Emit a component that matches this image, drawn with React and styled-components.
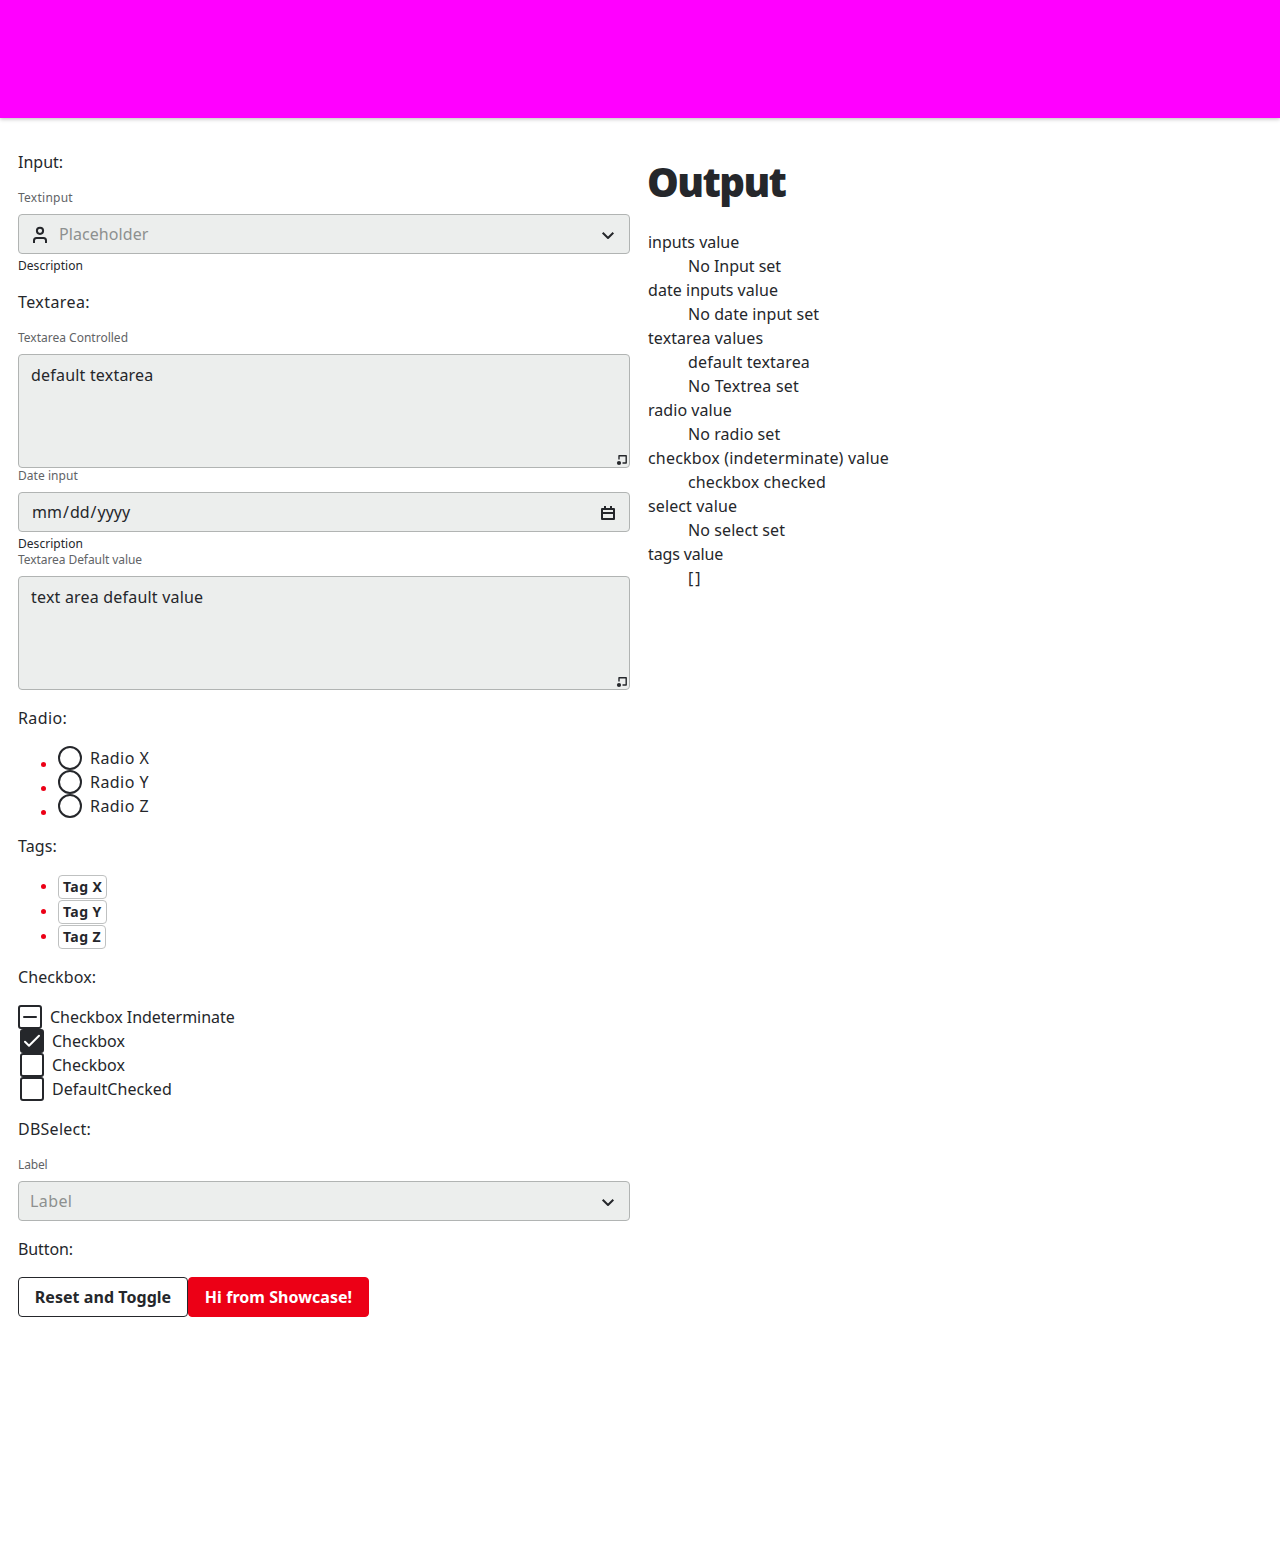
import React from 'react';
import styled, { createGlobalStyle, css } from 'styled-components';

const ink = '#25272b';
const red = '#ec0016';

const GlobalStyle = createGlobalStyle`
  *, *::before, *::after { box-sizing: border-box; }
  body {
    margin: 0;
    background: #fff;
    color: ${ink};
    font: 400 16px/24px "Noto Sans", "Open Sans", sans-serif;
  }
`;

const track = css`
  letter-spacing: ${({ $track = 0 }) => $track}px;
`;

const Header = styled.header`
  height: 118px;
  background: #ff00ff;
  box-shadow: 0 1px 4px rgba(0, 0, 0, 0.28);
`;

const Page = styled.main`
  display: grid;
  grid-template-columns: 612px 612px;
  column-gap: 18px;
  padding: 32px 18px 0;
`;

const Column = styled.section`
  display: flex;
  flex-direction: column;
`;

const SectionTitle = styled.p`
  margin: 0 0 16px;
  ${track}

  * + & { margin-top: 16px; }
`;

const Field = styled.div`
  display: flex;
  flex-direction: column;
`;

const Label = styled.label`
  margin-bottom: 8px;
  font-size: 12px;
  line-height: 16px;
  color: #616366;
  ${track}
`;

const Description = styled.span`
  margin-top: 4px;
  font-size: 12px;
  line-height: 16px;
  letter-spacing: 0.04px;
`;

const Control = styled.div`
  display: flex;
  align-items: center;
  height: 40px;
  padding: 0 9px;
  border: 1px solid #b1b4b3;
  border-radius: 4px;
  background: #eceeed;
`;

const fieldReset = css`
  flex: 1;
  min-width: 0;
  height: 38px;
  margin: 0;
  border: 0;
  outline: 0;
  background: transparent;
  color: ${ink};
  font: inherit;
`;

const TextInput = styled.input`
  ${fieldReset}
  padding: 0 0 0 7px;
  letter-spacing: 0.07px;
  &::placeholder { color: #8d908f; opacity: 1; }
`;

const DateInput = styled.input`
  ${fieldReset}
  padding: 0 0 0 3px;
  &::-webkit-calendar-picker-indicator { display: none; }
`;

const Select = styled.select`
  ${fieldReset}
  appearance: none;
  padding: 0 0 0 2px;
  color: #8d908f;
  letter-spacing: 0.4px;
`;

const AreaFrame = styled.div`
  position: relative;
  display: flex;
  height: 114px;
  border: 1px solid #b1b4b3;
  border-radius: 4px;
  background: #eceeed;
`;

const Area = styled.textarea`
  ${fieldReset}
  height: 112px;
  padding: 8px 12px;
  resize: none;
  letter-spacing: 0.2px;
`;

const Grip = styled.svg`
  position: absolute;
  right: 1px;
  bottom: 1px;
  width: 12px;
  height: 12px;
`;

const Icon = styled.svg`
  flex: none;
  width: 24px;
  height: 24px;
  fill: none;
  stroke: ${ink};
  stroke-width: 2;
  stroke-linejoin: round;
`;

const List = styled.ul`
  margin: 0;
  padding: 0 0 0 23px;
  list-style: none;
`;

const Item = styled.li`
  display: flex;
  align-items: ${({ $low }) => ($low ? 'center' : 'flex-end')};
  height: ${({ $low }) => ($low ? 24 : 25)}px;

  &::before {
    content: '';
    width: 5px;
    height: 5px;
    margin: ${({ $low }) => ($low ? '13px 12px 0 0' : '0 12px 10px 0')};
    border-radius: 50%;
    background: ${red};
  }
`;

const Choice = styled.label`
  display: flex;
  align-items: center;
  gap: 8px;
  height: 24px;
  margin-left: ${({ $indent = 0 }) => $indent}px;
  ${track}
`;

const RadioDot = styled.input`
  appearance: none;
  width: 24px;
  height: 24px;
  margin: 0;
  border: 2px solid ${ink};
  border-radius: 50%;
`;

const Box = styled.span`
  display: flex;
  width: 24px;
  height: 24px;
  border: 2px solid ${ink};
  border-radius: 3px;
  background: ${({ $filled }) => ($filled ? ink : '#fff')};
`;

const Mark = styled(Icon)`
  margin: -2px;
  stroke: ${({ $light }) => ($light ? '#fff' : ink)};
  stroke-linecap: round;
`;

const Tag = styled.span`
  height: 24px;
  padding: 0 4px;
  border: 1px solid #bfc1c1;
  border-radius: 4px;
  font-size: 14px;
  font-weight: 700;
  line-height: 22px;
  letter-spacing: 0.4px;
`;

const Buttons = styled.div`
  display: flex;
`;

const Button = styled.button`
  width: ${({ $primary }) => ($primary ? 181 : 170)}px;
  height: 40px;
  padding: 0;
  border: 1px solid ${({ $primary }) => ($primary ? red : ink)};
  border-radius: 4px;
  background: ${({ $primary }) => ($primary ? red : '#fff')};
  color: ${({ $primary }) => ($primary ? '#fff' : ink)};
  font: inherit;
  font-weight: 700;
  letter-spacing: 0.05px;
`;

const Heading = styled.h1`
  margin: 8px 0 24px -1px;
  font-size: 40px;
  font-weight: 900;
  line-height: 48px;
  letter-spacing: -1.6px;
`;

const Values = styled.dl`
  margin: 0;
`;

const Term = styled.dt`
  ${track}
`;

const Value = styled.dd`
  margin: 0 0 0 40px;
  ${track}
`;

const Chevron = () => (
  <Icon viewBox="0 0 24 24">
    <path d="M6.7 10.7 12 16l5.3-5.3" />
  </Icon>
);

const Person = () => (
  <Icon viewBox="0 0 24 24">
    <circle cx="12" cy="8.8" r="3.1" />
    <path d="M6 21v-2.5A2.5 2.5 0 0 1 8.5 16h7a2.5 2.5 0 0 1 2.5 2.5V21" />
  </Icon>
);

const Calendar = () => (
  <Icon viewBox="0 0 24 24">
    <path d="M6 9h12v10H6zM6 13h12M9 6v3M15 6v3" />
  </Icon>
);

const TextArea = ({ value }) => (
  <AreaFrame>
    <Area defaultValue={value} spellCheck={false} />
    <Grip viewBox="0 0 12 12">
      <path
        d="M3 5.5V1.8h7.2V9H6.5"
        fill="none"
        stroke={ink}
        strokeWidth="1.4"
        strokeLinejoin="round"
      />
      <circle cx="3" cy="9" r="2.1" fill={ink} />
    </Grip>
  </AreaFrame>
);

const output = [
  ['inputs value', -0.03, [['No Input set', -0.03]]],
  ['date inputs value', 0.04, [['No date input set', 0.07]]],
  ['textarea values', 0.08, [['default textarea', 0.17], ['No Textrea set', 0.25]]],
  ['radio value', 0.05, [['No radio set', 0.06]]],
  ['checkbox (indeterminate) value', 0.18, [['checkbox checked', 0.1]]],
  ['select value', 0.12, [['No select set', 0.09]]],
  ['tags value', -0.15, [['[]', 2]]],
];

export default function App() {
  return (
    <>
      <GlobalStyle />
      <Header />
      <Page>
        <Column>
          <SectionTitle>Input:</SectionTitle>
          <Field>
            <Label $track={0.25}>Textinput</Label>
            <Control>
              <Person />
              <TextInput placeholder="Placeholder" />
              <Chevron />
            </Control>
            <Description>Description</Description>
          </Field>

          <SectionTitle $track={0.42}>Textarea:</SectionTitle>
          <Field>
            <Label>Textarea Controlled</Label>
            <TextArea value="default textarea" />
          </Field>
          <Field>
            <Label $track={0.05}>Date input</Label>
            <Control>
              <DateInput type="date" />
              <Calendar />
            </Control>
            <Description>Description</Description>
          </Field>
          <Field>
            <Label $track={-0.07}>Textarea Default value</Label>
            <TextArea value="text area default value" />
          </Field>

          <SectionTitle $track={0.4}>Radio:</SectionTitle>
          <List>
            {['X', 'Y', 'Z'].map((n) => (
              <Item key={n} $low>
                <Choice $track={0.45}>
                  <RadioDot type="radio" name="radio" />
                  Radio {n}
                </Choice>
              </Item>
            ))}
          </List>

          <SectionTitle $track={0.1}>Tags:</SectionTitle>
          <List>
            {['X', 'Y', 'Z'].map((n) => (
              <Item key={n}>
                <Tag>Tag {n}</Tag>
              </Item>
            ))}
          </List>

          <SectionTitle $track={0.1}>Checkbox:</SectionTitle>
          <Choice $track={-0.03}>
            <Box>
              <Mark viewBox="0 0 24 24"><path d="M6 12h12" /></Mark>
            </Box>
            Checkbox Indeterminate
          </Choice>
          <Choice $indent={2}>
            <Box $filled>
              <Mark viewBox="0 0 24 24" $light><path d="M5 12.800 9 16.800 19 6.800" /></Mark>
            </Box>
            Checkbox
          </Choice>
          <Choice $indent={2}>
            <Box />
            Checkbox
          </Choice>
          <Choice $indent={2} $track={0.05}>
            <Box />
            DefaultChecked
          </Choice>

          <SectionTitle $track={0.25}>DBSelect:</SectionTitle>
          <Field>
            <Label $track={-0.15}>Label</Label>
            <Control>
              <Select>
                <option>Label</option>
              </Select>
              <Chevron />
            </Control>
          </Field>

          <SectionTitle $track={-0.1}>Button:</SectionTitle>
          <Buttons>
            <Button>Reset and Toggle</Button>
            <Button $primary>Hi from Showcase!</Button>
          </Buttons>
        </Column>

        <Column>
          <Heading>Output</Heading>
          <Values>
            {output.map(([term, spacing, values]) => (
              <React.Fragment key={term}>
                <Term $track={spacing}>{term}</Term>
                {values.map(([text, gap]) => (
                  <Value key={text} $track={gap}>{text}</Value>
                ))}
              </React.Fragment>
            ))}
          </Values>
        </Column>
      </Page>
    </>
  );
}
